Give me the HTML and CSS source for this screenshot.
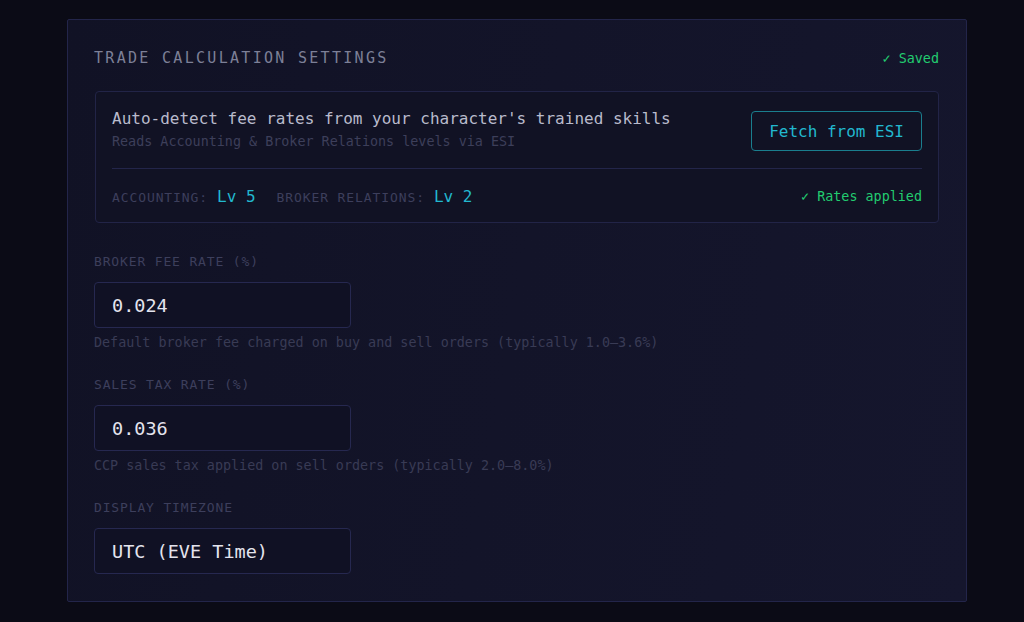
FILE: index.html
```html
<!DOCTYPE html>
<html lang="en">
<head>
    <meta charset="UTF-8">
    <meta name="viewport" content="width=device-width, initial-scale=1.0">
    <title>Trade Calculation Settings</title>
    <link rel="stylesheet" href="styles.css">
</head>
<body>
    <div class="settings-card">
        <div class="card-header">
            <h2>TRADE CALCULATION SETTINGS</h2>
            <div class="status-ok">✓ Saved</div>
        </div>

        <div class="esi-box">
            <div class="esi-top">
                <div class="esi-text">
                    <div class="esi-title">Auto-detect fee rates from your character's trained skills</div>
                    <div class="esi-sub">Reads Accounting &amp; Broker Relations levels via ESI</div>
                </div>
                <button class="fetch-btn">Fetch from ESI</button>
            </div>
            <div class="esi-bottom">
                <div class="skills">
                    <span class="skill"><span class="skill-name">ACCOUNTING:</span><span class="skill-lv">Lv 5</span></span>
                    <span class="skill"><span class="skill-name">BROKER RELATIONS:</span><span class="skill-lv">Lv 2</span></span>
                </div>
                <div class="status-ok">✓ Rates applied</div>
            </div>
        </div>

        <div class="field">
            <label class="field-label">BROKER FEE RATE (%)</label>
            <div class="field-input">0.024</div>
            <div class="field-help">Default broker fee charged on buy and sell orders (typically 1.0–3.6%)</div>
        </div>

        <div class="field">
            <label class="field-label">SALES TAX RATE (%)</label>
            <div class="field-input">0.036</div>
            <div class="field-help">CCP sales tax applied on sell orders (typically 2.0–8.0%)</div>
        </div>

        <div class="field">
            <label class="field-label">DISPLAY TIMEZONE</label>
            <div class="field-input">UTC (EVE Time)</div>
        </div>
    </div>
</body>
</html>
```

FILE: styles.css
```css
* {
    margin: 0;
    padding: 0;
    box-sizing: border-box;
    font-family: 'DejaVu Sans Mono', monospace;
}

body {
    background: #0b0b16;
    height: 100vh;
    padding: 19px 0 0 67px;
}

.settings-card {
    width: 900px;
    background: linear-gradient(100deg, #111225, #15162d);
    border: 1px solid #23254a;
    border-radius: 2px;
    padding: 28px 27px 27px 26px;
}

.card-header {
    display: flex;
    justify-content: space-between;
    align-items: center;
    height: 20px;
    margin-bottom: 23px;
}

.card-header h2 {
    font-size: 15px;
    font-weight: normal;
    letter-spacing: 2.3px;
    color: #7d8097;
}

.status-ok {
    font-size: 13.4px;
    color: #22cc70;
}

/* ESI box */
.esi-box {
    background: #111224;
    border: 1px solid #222447;
    border-radius: 4px;
    padding: 16px;
    margin-left: 1px;
}

.esi-top {
    display: flex;
    justify-content: space-between;
    align-items: center;
    height: 61px;
    padding-bottom: 16px;
    border-bottom: 1px solid #23254a;
}

.esi-title {
    font-size: 16px;
    line-height: 22px;
    color: #b9bbcc;
}

.esi-sub {
    font-size: 13.4px;
    line-height: 20px;
    margin-top: 2px;
    color: #3d3f5a;
}

.fetch-btn {
    background: transparent;
    border: 1px solid #1a7e8e;
    border-radius: 4px;
    color: #22b8cf;
    font-size: 16px;
    padding: 0 17px;
    height: 40px;
    margin-top: 2px;
}

.esi-bottom {
    display: flex;
    justify-content: space-between;
    align-items: center;
    padding-top: 17px;
    height: 37px;
}

.skills {
    display: flex;
    gap: 21px;
    align-items: baseline;
}

.skill-name {
    font-size: 13px;
    letter-spacing: 0.9px;
    color: #3d3f5c;
    margin-right: 9px;
}

.skill-lv {
    font-size: 16px;
    color: #22b8cf;
}

/* Form fields */
.field {
    margin-top: 30px;
}

.field + .field {
    margin-top: 24px;
}

.field-label {
    display: block;
    font-size: 13px;
    line-height: 18px;
    letter-spacing: 0.85px;
    color: #3d3f5c;
    margin-bottom: 11px;
}

.field-input {
    width: 257px;
    height: 46px;
    display: flex;
    align-items: center;
    padding: 0 17px;
    background: #101124;
    border: 1px solid #262850;
    border-radius: 4px;
    font-size: 18.5px;
    color: #e4e4ee;
}

.field-help {
    font-size: 13.4px;
    line-height: 18px;
    margin-top: 6px;
    color: #393b55;
}
```
